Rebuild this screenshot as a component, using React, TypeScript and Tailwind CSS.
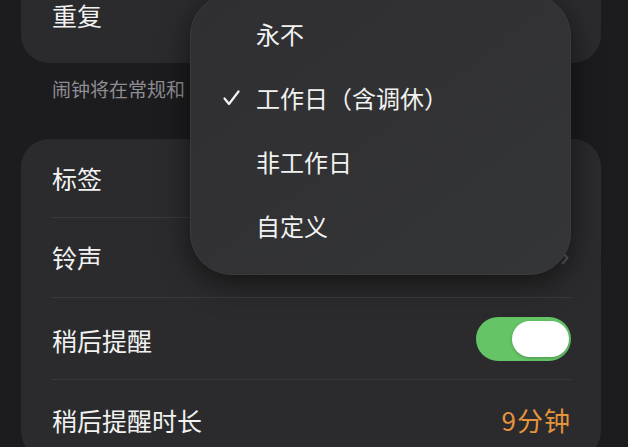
import React from "react";

const font = { fontFamily: '"Noto Sans CJK SC", "Noto Sans", sans-serif' };

function Divider() {
  return <div className="ml-[31px] mr-[30px] h-px bg-[#3a3a3c]" />;
}

export default function App() {
  return (
    <div
      className="relative w-[628px] h-[447px] overflow-hidden bg-[#1c1c1e] text-[#f2f2f2]"
      style={font}
    >
      <div className="flex flex-col">
        {/* Repeat card */}
        <div className="ml-[21px] mr-[27px] mt-[-24px] h-[87px] rounded-[28px] bg-[#2b2b2d]">
          <div className="flex h-[78px] items-center pl-[31px] text-[25px] leading-none">
            重复
          </div>
        </div>

        {/* Caption */}
        <div className="h-[76px] pl-[52px] pt-[16px] text-[19px] leading-[20px] text-[#8d8d92]">
          闹钟将在常规和
        </div>

        {/* Settings card */}
        <div className="ml-[21px] mr-[27px] h-[320px] rounded-[28px] bg-[#2b2b2d]">
          <div className="flex h-[78px] items-center pl-[31px] text-[25px] leading-none">
            标签
          </div>
          <Divider />
          <div className="flex h-[79px] items-center justify-between pl-[31px] pr-[32px] text-[25px] leading-none">
            <span>铃声</span>
            <svg width="8" height="14" viewBox="0 0 8 14" fill="none">
              <path
                d="M1.5 1.5 L6.5 7 L1.5 12.5"
                stroke="#5c5c60"
                strokeWidth="2"
                strokeLinecap="round"
                strokeLinejoin="round"
              />
            </svg>
          </div>
          <Divider />
          <div className="flex h-[81px] items-center justify-between pl-[31px] pr-[30px] text-[25px] leading-none">
            <span className="pt-[3px]">稍后提醒</span>
            <div className="flex h-[44px] w-[95px] items-center justify-end rounded-full bg-[#64c466] pr-[2px]">
              <div className="h-[36px] w-[57px] rounded-full bg-white shadow-[0_1px_3px_rgba(0,0,0,0.25)]" />
            </div>
          </div>
          <Divider />
          <div className="flex h-[80px] items-center justify-between pl-[31px] pr-[30px] text-[25px] leading-none">
            <span>稍后提醒时长</span>
            <span className="text-[26px] tracking-[1px] text-[#e5933d]">9分钟</span>
          </div>
        </div>
      </div>

      {/* Dropdown menu */}
      <div className="absolute left-[190px] top-[-6px] w-[381px] rounded-[42px] border border-[#3a3a3c] bg-gradient-to-br from-[#2f2f31] to-[#343537] pt-[7px] pb-[16px] shadow-[0_8px_30px_rgba(0,0,0,0.55)]">
        <div className="flex h-[64px] items-center pl-[65px] text-[24px] leading-none">永不</div>
        <div className="relative flex h-[64px] items-center pl-[65px] text-[24px] leading-none">
          <svg
            className="absolute left-[32px] top-[24px]"
            width="17"
            height="16"
            viewBox="0 0 17 16"
            fill="none"
          >
            <path
              d="M1.5 8.5 L6 14 L15.5 1.5"
              stroke="#f2f2f2"
              strokeWidth="2.2"
              strokeLinecap="round"
              strokeLinejoin="round"
            />
          </svg>
          工作日（含调休）
        </div>
        <div className="flex h-[64px] items-center pl-[65px] text-[24px] leading-none">非工作日</div>
        <div className="flex h-[64px] items-center pl-[65px] text-[24px] leading-none">自定义</div>
      </div>
    </div>
  );
}
